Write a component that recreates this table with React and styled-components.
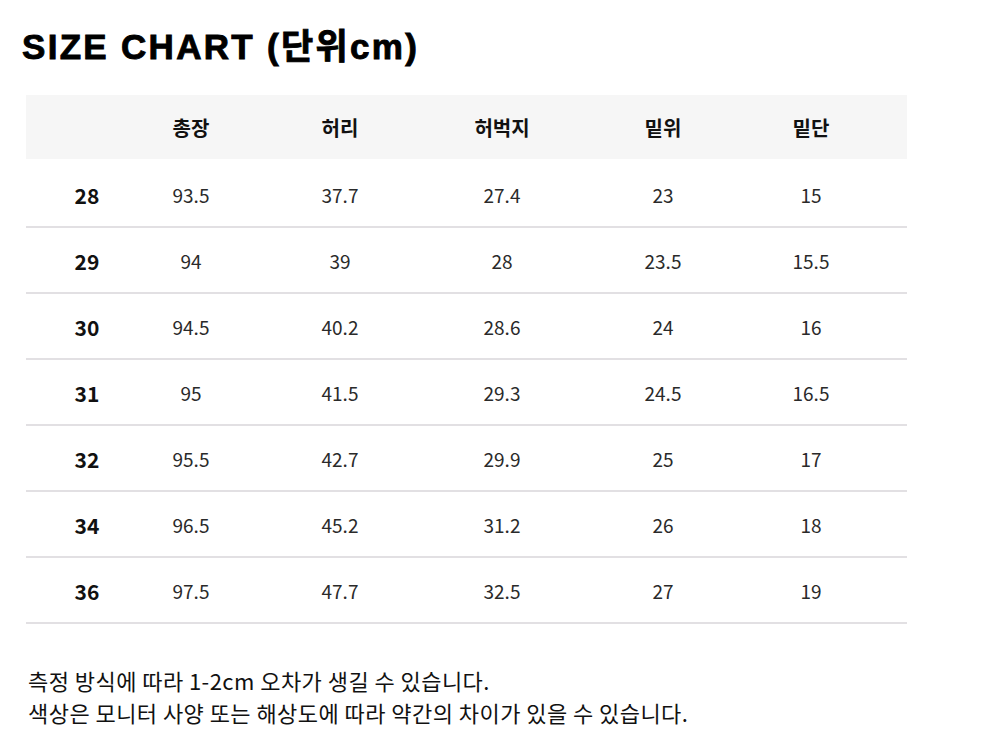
import React from 'react'
import styled, { createGlobalStyle } from 'styled-components'

const GlobalStyle = createGlobalStyle`
    html, body {
        margin: 0;
        padding: 0;
        background: #fff;
    }
    body {
        font-family: "Noto Sans CJK KR", "Noto Sans", sans-serif;
        color: #111;
    }
`

const Page = styled.div`
    width: 988px;
    height: 750px;
    padding: 27px 0 0 22px;
    box-sizing: border-box;
`

const Title = styled.h1`
    margin: 0 0 28px 0;
    font-family: "Liberation Sans", "Noto Sans CJK KR", sans-serif;
    font-size: 35px;
    font-weight: 700;
    letter-spacing: 2.3px;
    line-height: 40px;
    color: #000;
    -webkit-text-stroke: 0.9px #000;
`

const Table = styled.div`
    width: 881px;
    margin-left: 4px;
`

const cols = '122px 86px 212px 112px 210px 86px 1fr'

const HeadRow = styled.div`
    display: grid;
    grid-template-columns: ${cols};
    height: 64px;
    margin-bottom: 3px;
    align-items: center;
    background: #f6f6f6;
`

const Row = styled.div`
    display: grid;
    grid-template-columns: ${cols};
    height: 64px;
    align-items: center;
    border-bottom: 2px solid #e2e0e3;
`

const Cell = styled.div`
    text-align: center;
    font-size: ${p => (p.$head ? '20px' : p.$bold ? '21px' : '19px')};
    font-weight: ${p => (p.$bold ? 700 : 400)};
    color: ${p => (p.$bold ? '#111' : '#2a2a2a')};
    padding-top: ${p => (p.$head ? '0' : '1px')};
`

const Notes = styled.div`
    margin: 40px 0 0 6px;
    font-size: 22px;
    line-height: 32px;
    color: #111;
    letter-spacing: 0.45px;
`

const headers = ['총장', '허리', '허벅지', '밑위', '밑단']

const rows = [
    ['28', '93.5', '37.7', '27.4', '23', '15'],
    ['29', '94', '39', '28', '23.5', '15.5'],
    ['30', '94.5', '40.2', '28.6', '24', '16'],
    ['31', '95', '41.5', '29.3', '24.5', '16.5'],
    ['32', '95.5', '42.7', '29.9', '25', '17'],
    ['34', '96.5', '45.2', '31.2', '26', '18'],
    ['36', '97.5', '47.7', '32.5', '27', '19'],
]

const App = () => (
    <Page>
        <GlobalStyle />
        <Title>SIZE CHART (단위cm)</Title>
        <Table>
            <HeadRow>
                <Cell $head />
                {headers.map(h => <Cell key={h} $head $bold>{h}</Cell>)}
            </HeadRow>
            {rows.map(r => (
                <Row key={r[0]}>
                    {r.map((v, i) => <Cell key={i} $bold={i === 0}>{v}</Cell>)}
                </Row>
            ))}
        </Table>
        <Notes>
            <div>측정 방식에 따라 1-2cm 오차가 생길 수 있습니다.</div>
            <div>색상은 모니터 사양 또는 해상도에 따라 약간의 차이가 있을 수 있습니다.</div>
        </Notes>
    </Page>
)

export default App
